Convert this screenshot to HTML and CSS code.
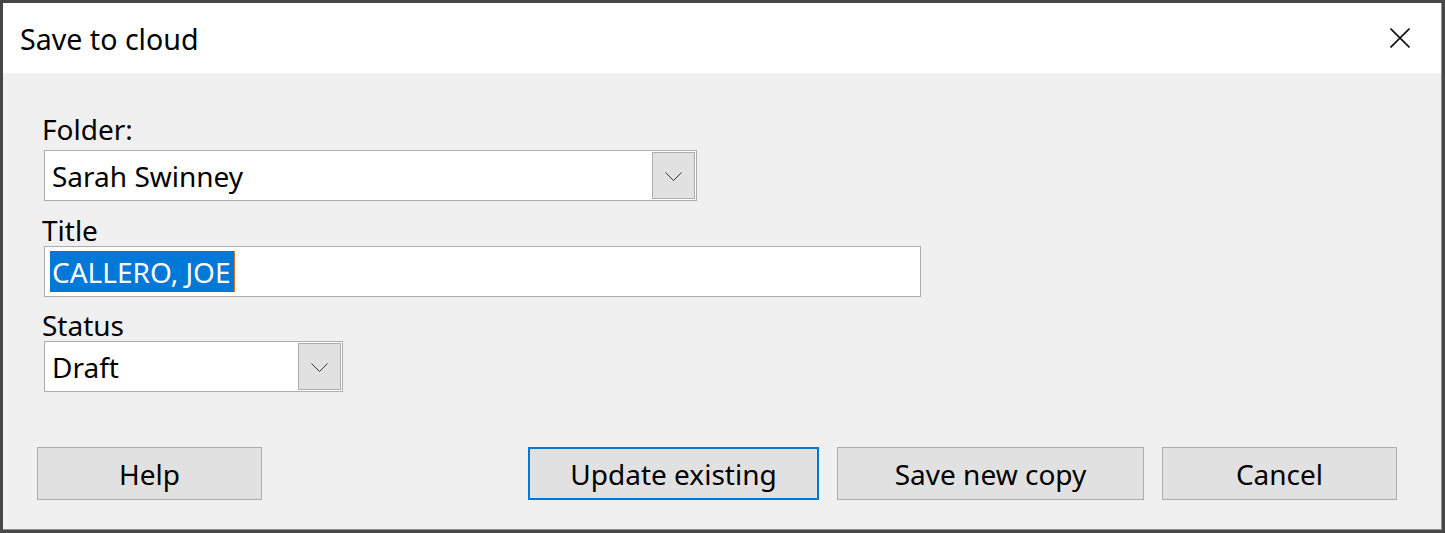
FILE: index.html
```html
<!DOCTYPE html>
<html lang="en">
<head>
<meta charset="utf-8">
<title>Save to cloud</title>
<link rel="stylesheet" href="styles.css">
</head>
<body>
<div class="window">
  <div class="frame">
    <div class="titlebar">
      <span class="title">Save to cloud</span>
      <svg class="close" width="20" height="20" viewBox="0 0 20 20" aria-label="Close">
        <path d="M0.5 0.5 L19.5 19.5 M19.5 0.5 L0.5 19.5" stroke="#111" stroke-width="1.6" fill="none"/>
      </svg>
    </div>
    <div class="content">
      <div class="form">
        <div class="label label-first">Folder:</div>
        <div class="combo combo-folder">
          <span class="value">Sarah Swinney</span>
          <span class="drop">
            <svg width="17" height="9" viewBox="0 0 17 9"><path d="M0.5 0.5 L8.5 8.5 L16.5 0.5" stroke="#333" stroke-width="1" fill="none"/></svg>
          </span>
        </div>
        <div class="label">Title</div>
        <div class="textbox">
          <span class="selection">CALLERO, JOE</span>
        </div>
        <div class="label label-status">Status</div>
        <div class="combo combo-status">
          <span class="value">Draft</span>
          <span class="drop">
            <svg width="17" height="9" viewBox="0 0 17 9"><path d="M0.5 0.5 L8.5 8.5 L16.5 0.5" stroke="#333" stroke-width="1" fill="none"/></svg>
          </span>
        </div>
      </div>
      <div class="buttons">
        <button class="btn btn-help">Help</button>
        <div class="spacer"></div>
        <button class="btn btn-default btn-update">Update existing</button>
        <button class="btn btn-copy">Save new copy</button>
        <button class="btn btn-cancel">Cancel</button>
      </div>
    </div>
  </div>
</div>
</body>
</html>
```

FILE: styles.css
```css
* {
  box-sizing: border-box;
}

html, body {
  margin: 0;
  padding: 0;
  background: #4a4a4a;
}

body {
  font-family: "Noto Sans", "Open Sans", sans-serif;
  color: #000;
}

.window {
  width: 1445px;
  height: 533px;
  border: 3px solid #474747;
  background: #f0f0f0;
}

.frame {
  height: 100%;
  display: flex;
  flex-direction: column;
  border-right: 1px solid #8e8e8e;
  border-bottom: 1px solid #8e8e8e;
}

.titlebar {
  height: 70px;
  flex: none;
  background: #fff;
  display: flex;
  align-items: center;
  justify-content: space-between;
  padding: 2px 31px 0 17px;
}

.title {
  font-size: 28.6px;
  line-height: 38px;
}

.close {
  display: block;
  margin-top: -2px;
}

.content {
  flex: 1;
  display: flex;
  flex-direction: column;
  padding: 41px 44px 29px 34px;
}

.form {
  display: flex;
  flex-direction: column;
  align-items: flex-start;
  padding-left: 7px;
}

.label {
  font-size: 28px;
  line-height: 30px;
  height: 30px;
  margin: 14px 0 1px -2px;
  white-space: nowrap;
}

.label-first {
  margin-top: 0;
  margin-bottom: 6px;
}

.label-status {
  margin-top: 13px;
}

.combo,
.textbox {
  flex: none;
  height: 51px;
  background: #fff;
  border: 1px solid #adadad;
  display: flex;
  align-items: stretch;
  font-size: 28px;
}

.combo {
  padding: 1px;
}

.combo-folder {
  width: 653px;
}

.combo-status {
  width: 299px;
}

.combo .value {
  flex: 1;
  display: flex;
  align-items: center;
  padding-left: 6px;
  white-space: nowrap;
}

.drop {
  flex: none;
  width: 43px;
  background: #e1e1e1;
  border: 1px solid #adadad;
  display: flex;
  align-items: center;
  justify-content: center;
  padding-top: 1px;
}

.drop svg {
  display: block;
}

.textbox {
  width: 877px;
  padding: 4px 0 0 5px;
  align-items: flex-start;
}

.selection {
  display: inline-block;
  height: 41px;
  line-height: 43px;
  padding: 0 3px 0 2px;
  background: #0078d7;
  color: #fff;
  border-right: 1px solid #d97a1c;
  white-space: nowrap;
}

.buttons {
  margin-top: auto;
  display: flex;
  gap: 18px;
}

.spacer {
  flex: 1;
}

.btn {
  height: 53px;
  background: #e1e1e1;
  border: 1px solid #adadad;
  font-family: "Noto Sans", "Open Sans", sans-serif;
  font-size: 28px;
  color: #000;
  padding: 0;
  margin: 0;
  line-height: 38px;
  display: flex;
  align-items: center;
  justify-content: center;
}

.btn-default {
  border: 2px solid #0078d7;
}

.btn-help {
  width: 225px;
}

.btn-update {
  width: 291px;
}

.btn-copy {
  width: 307px;
}

.btn-cancel {
  width: 235px;
}
```
